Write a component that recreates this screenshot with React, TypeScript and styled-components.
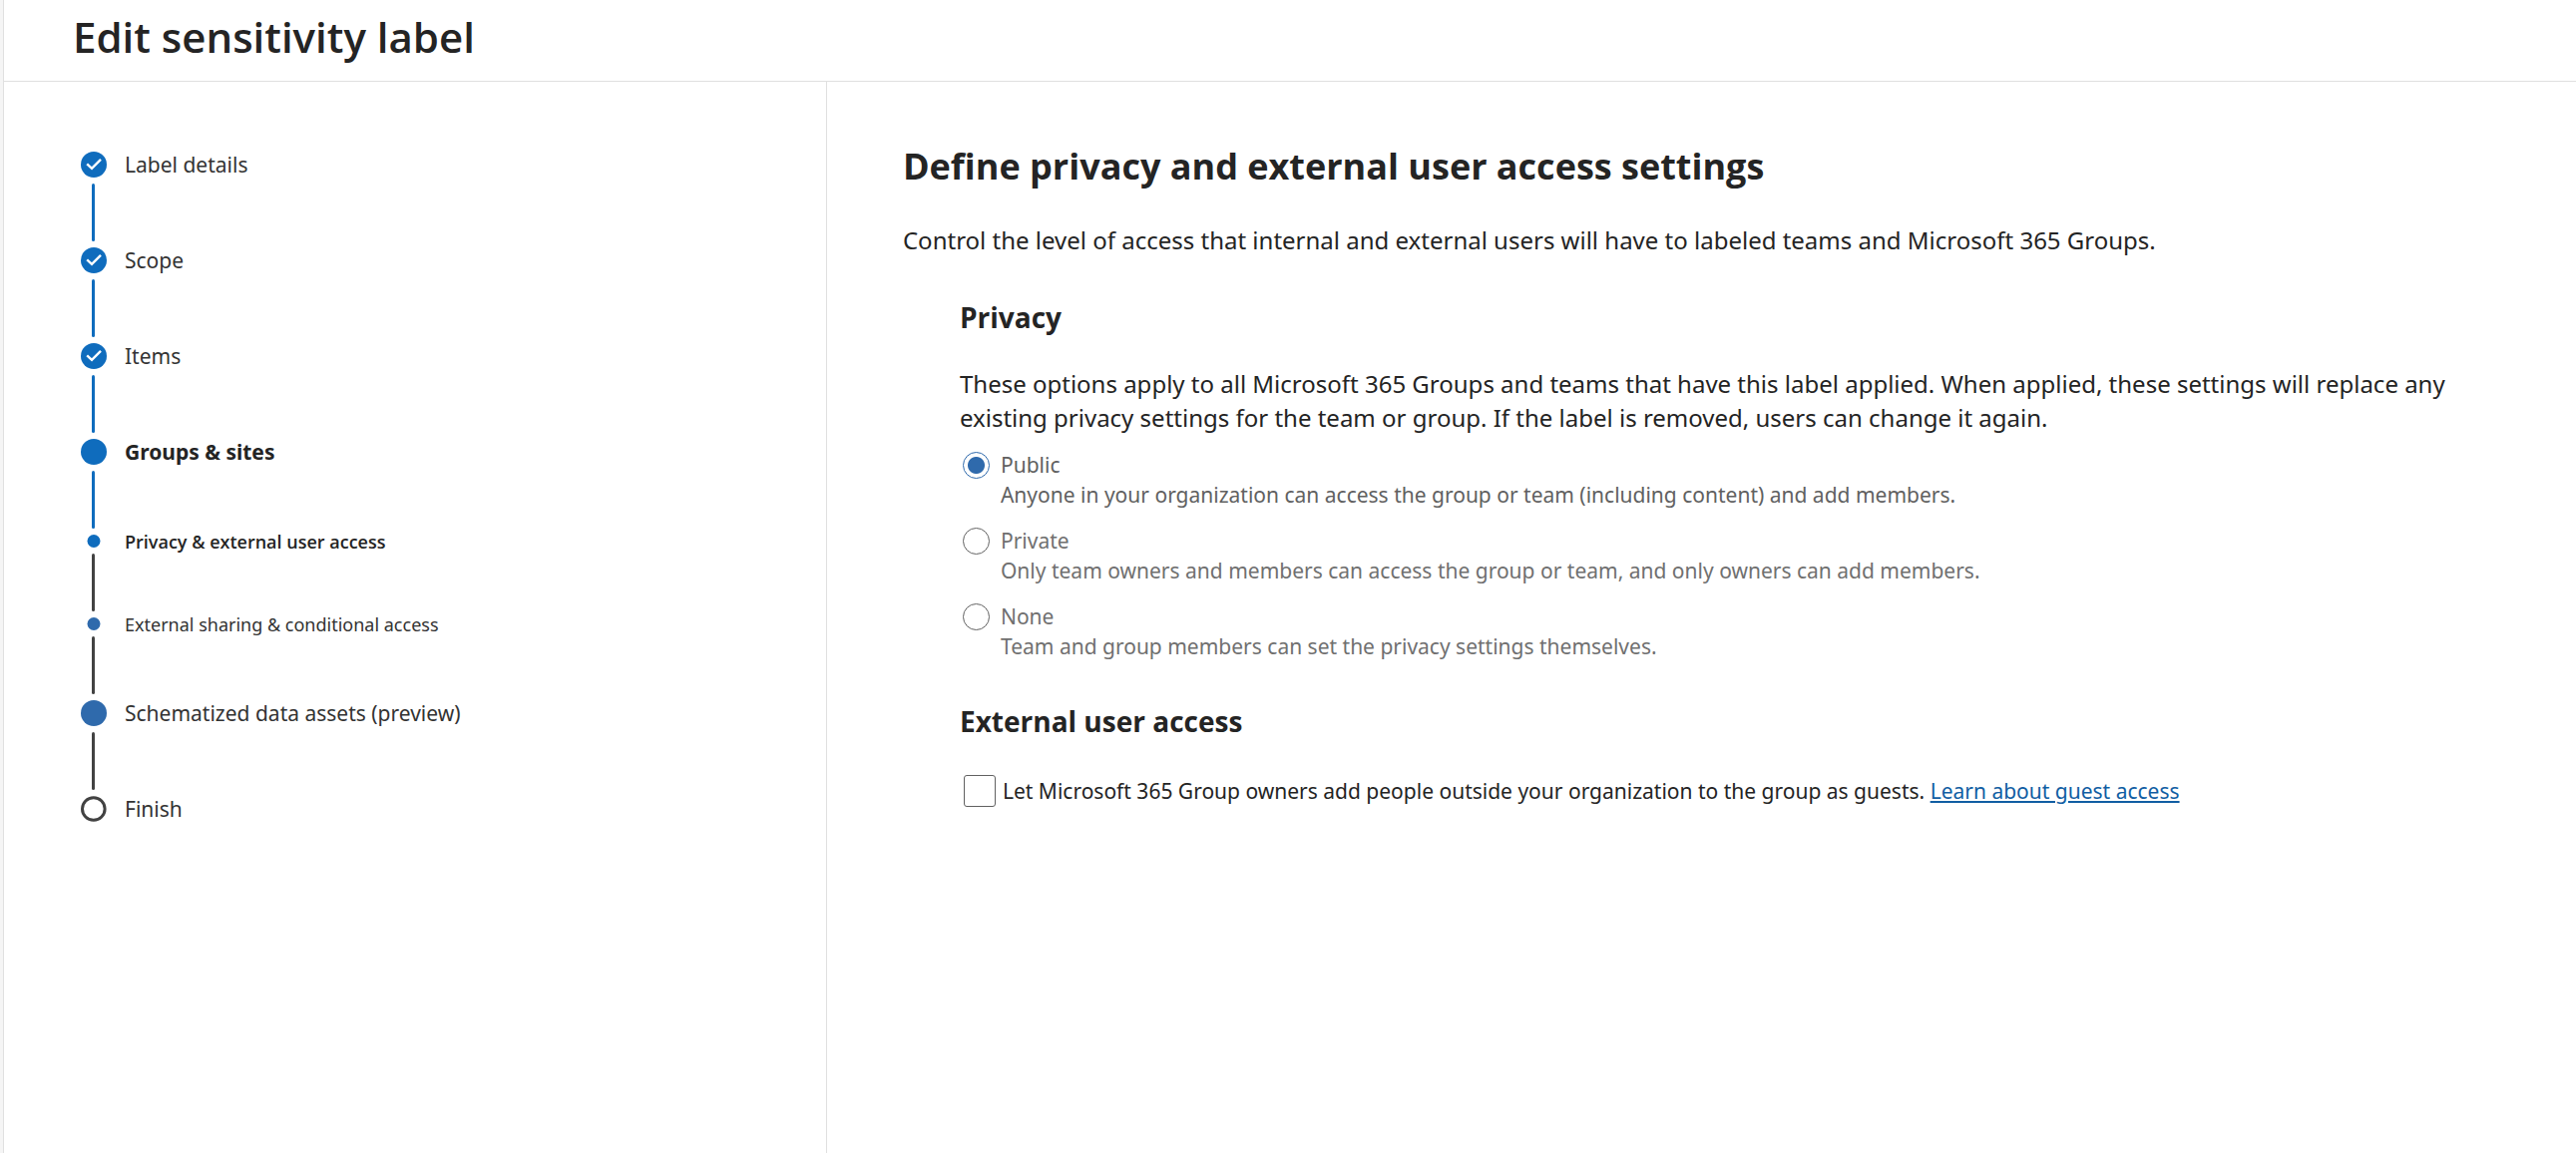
import React, { useState } from "react";
import styled, { createGlobalStyle } from "styled-components";

const headingFont = `"Open Sans", "Noto Sans", sans-serif`;

const GlobalStyle = createGlobalStyle`
  * { box-sizing: border-box; }
  body {
    margin: 0;
    background: #fff;
    color: #242424;
    font-family: "Noto Sans", "Open Sans", sans-serif;
  }
  h1, h2, h3, p, ol, fieldset { margin: 0; padding: 0; border: 0; }
  h1, h2, h3 { font-family: ${headingFont}; }
`;

const Page = styled.div`
  min-height: 100vh;
  display: flex;
  flex-direction: column;
  border-left: 3px solid #f5f5f5;
`;

const Header = styled.header`
  padding: 9px 69px 16px;
  border-left: 1px solid #e0e0e0;
  border-bottom: 1px solid #e0e0e0;
`;

const Title = styled.h1`
  font-size: 42px;
  line-height: 56px;
  font-weight: 600;
`;

const Body = styled.div`
  flex: 1;
  display: grid;
  grid-template-columns: 32% 1fr;
  border-left: 1px solid #e0e0e0;
`;

const Sidebar = styled.nav`
  padding: 70px 77px;
  border-right: 1px solid #e0e0e0;
`;

const StepList = styled.ol`
  display: flex;
  flex-direction: column;
  gap: 6px;
  list-style: none;
`;

const Step = styled.li`
  display: flex;
  flex-direction: column;
  gap: 6px;
`;

const StepRow = styled.div<{ $sub?: boolean }>`
  display: flex;
  align-items: center;
  gap: 18px;
  height: ${(p) => (p.$sub ? 13 : 26)}px;
`;

const Marker = styled.span`
  display: flex;
  justify-content: center;
  width: 26px;
  flex: none;
`;

const StepLabel = styled.span<{ $sub?: boolean; $weight?: number }>`
  font-family: ${(p) => (p.$weight && p.$sub ? headingFont : "inherit")};
  font-size: ${(p) => (p.$sub ? 18 : 21)}px;
  line-height: 26px;
  font-weight: ${(p) => p.$weight ?? 400};
  color: ${(p) => (p.$weight ? "#242424" : "#333")};
  white-space: nowrap;
`;

const Connector = styled.span<{ $done?: boolean }>`
  width: 3px;
  height: 58px;
  margin-left: 11px;
  border-radius: 2px;
  background: ${(p) => (p.$done ? "#0f6cbd" : "#424242")};
`;

const Main = styled.main`
  padding: 61px 84px 60px 76px;
`;

const PageHeading = styled.h2`
  font-size: 36px;
  line-height: 48px;
  font-weight: 700;
`;

const BodyText = styled.p`
  font-size: 24px;
  line-height: 34px;
`;

const Intro = styled(BodyText)`
  margin-top: 33px;
`;

const Section = styled.section`
  margin-top: 40px;
  padding-left: 57px;
`;

const SectionHeading = styled.h3`
  margin-bottom: 30px;
  font-size: 28px;
  line-height: 40px;
  font-weight: 700;
`;

const Options = styled.fieldset`
  display: flex;
  flex-direction: column;
  gap: 16px;
  margin-top: 15px;
`;

const Option = styled.label<{ $selected: boolean }>`
  display: grid;
  grid-template-columns: 27px 1fr;
  column-gap: 11px;
  align-items: center;
  padding-left: 3px;
  font-size: 21px;
  line-height: 30px;
  color: ${(p) => (p.$selected ? "#616161" : "#707070")};
`;

const Radio = styled.input`
  appearance: none;
  width: 27px;
  height: 27px;
  margin: 0;
  border: 1px solid #616161;
  border-radius: 50%;
  background: #fff;
  &:checked {
    border: 1px solid #2f6aac;
    background: radial-gradient(circle, #2f6aac 8px, #fff 9px);
  }
`;

const Hint = styled.span`
  grid-column: 2;
`;

const GuestRow = styled.div`
  display: flex;
  align-items: center;
  gap: 7px;
  margin-top: 34px;
  padding-left: 4px;
  font-size: 21px;
  line-height: 32px;
`;

const Checkbox = styled.input`
  appearance: none;
  flex: none;
  width: 32px;
  height: 32px;
  margin: 0;
  border: 1px solid #616161;
  border-radius: 3px;
  background: #fff;
  &:checked {
    background: #0f6cbd;
  }
`;

const Link = styled.a`
  color: #115ea3;
  text-decoration: underline;
  text-decoration-thickness: 2px;
  text-underline-offset: 2px;
`;

type StepKind = "done" | "current" | "visited" | "todo";

interface StepData {
  label: string;
  kind: StepKind;
  sub?: boolean;
  weight?: number;
}

const steps: StepData[] = [
  { label: "Label details", kind: "done" },
  { label: "Scope", kind: "done" },
  { label: "Items", kind: "done" },
  { label: "Groups & sites", kind: "current", weight: 700 },
  { label: "Privacy & external user access", kind: "current", sub: true, weight: 600 },
  { label: "External sharing & conditional access", kind: "visited", sub: true },
  { label: "Schematized data assets (preview)", kind: "visited" },
  { label: "Finish", kind: "todo" },
];

const options = [
  { id: "public", label: "Public", hint: "Anyone in your organization can access the group or team (including content) and add members." },
  { id: "private", label: "Private", hint: "Only team owners and members can access the group or team, and only owners can add members." },
  { id: "none", label: "None", hint: "Team and group members can set the privacy settings themselves." },
];

function StepIcon({ kind, sub }: { kind: StepKind; sub?: boolean }) {
  const fill = kind === "visited" ? "#2f6aac" : "#0f6cbd";
  return (
    <svg width={26} height={sub ? 13 : 26} viewBox={sub ? "0 0 26 13" : "0 0 26 26"} aria-hidden="true">
      {sub && <circle cx="13" cy="6.5" r="6.5" fill={fill} />}
      {!sub && kind !== "todo" && <circle cx="13" cy="13" r="13" fill={fill} />}
      {kind === "todo" && <circle cx="12.8" cy="13" r="11.3" fill="none" stroke="#424242" strokeWidth="3" />}
      {kind === "done" && (
        <path d="M6.2 12.4 L11 16.8 L20 7.8" fill="none" stroke="#fff" strokeWidth="2.4" />
      )}
    </svg>
  );
}

export default function App() {
  const [privacy, setPrivacy] = useState("public");
  const [guests, setGuests] = useState(false);

  return (
    <Page>
      <GlobalStyle />
      <Header>
        <Title>Edit sensitivity label</Title>
      </Header>
      <Body>
        <Sidebar aria-label="Steps">
          <StepList>
            {steps.map((step, i) => (
              <Step key={step.label}>
                <StepRow $sub={step.sub}>
                  <Marker>
                    <StepIcon kind={step.kind} sub={step.sub} />
                  </Marker>
                  <StepLabel $sub={step.sub} $weight={step.weight}>
                    {step.label}
                  </StepLabel>
                </StepRow>
                {i < steps.length - 1 && <Connector $done={i < 4} />}
              </Step>
            ))}
          </StepList>
        </Sidebar>
        <Main>
          <PageHeading>Define privacy and external user access settings</PageHeading>
          <Intro>
            Control the level of access that internal and external users will have to labeled teams and Microsoft 365
            Groups.
          </Intro>
          <Section>
            <SectionHeading>Privacy</SectionHeading>
            <BodyText>
              These options apply to all Microsoft 365 Groups and teams that have this label applied. When applied,
              these settings will replace any existing privacy settings for the team or group. If the label is removed,
              users can change it again.
            </BodyText>
            <Options aria-label="Privacy">
              {options.map((o) => (
                <Option key={o.id} htmlFor={o.id} $selected={privacy === o.id}>
                  <Radio
                    type="radio"
                    id={o.id}
                    name="privacy"
                    checked={privacy === o.id}
                    onChange={() => setPrivacy(o.id)}
                  />
                  <span>{o.label}</span>
                  <Hint>{o.hint}</Hint>
                </Option>
              ))}
            </Options>
          </Section>
          <Section>
            <SectionHeading>External user access</SectionHeading>
            <GuestRow>
              <Checkbox type="checkbox" id="guests" checked={guests} onChange={(e) => setGuests(e.target.checked)} />
              <span>
                <label htmlFor="guests">
                  Let Microsoft 365 Group owners add people outside your organization to the group as guests.
                </label>{" "}
                <Link href="#guest-access">Learn about guest access</Link>
              </span>
            </GuestRow>
          </Section>
        </Main>
      </Body>
    </Page>
  );
}
